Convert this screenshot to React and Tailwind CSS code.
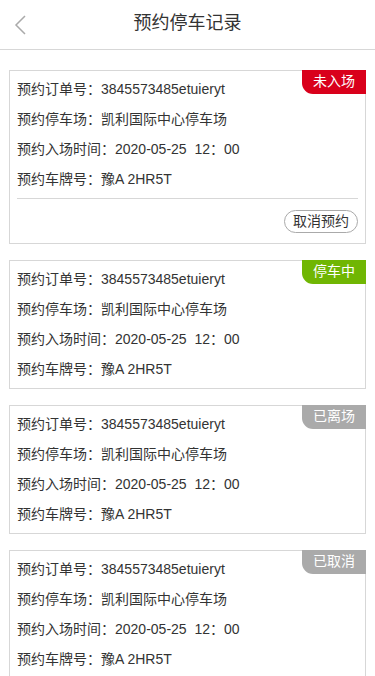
import React from "react";

const records = [
  { status: "未入场", color: "bg-[#d9001b]", cancel: true },
  { status: "停车中", color: "bg-[#70b603]" },
  { status: "已离场", color: "bg-[#aaaaaa]" },
  { status: "已取消", color: "bg-[#aaaaaa]" },
];

const Row = ({ children }) => (
  <div className="h-[30px] leading-[30px] text-[14px] text-[#333333]">{children}</div>
);

const RecordCard = ({ item }) => (
  <div className="relative border border-[#d7d7d7] bg-white px-[7px] pt-[3px] pb-[4px]">
    <div className={`absolute -top-px -right-px h-[24px] w-[64px] rounded-bl-[11px] ${item.color} text-center text-[14px] leading-[22px] text-white`}>
      {item.status}
    </div>
    <Row>预约订单号：3845573485etuieryt</Row>
    <Row>预约停车场：凯利国际中心停车场</Row>
    <Row>预约入场时间：2020-05-25&nbsp;&nbsp;12：00</Row>
    <Row>预约车牌号：豫A 2HR5T</Row>
    {item.cancel && (
      <div className="mt-[4px] border-t border-[#d7d7d7] pt-[11px] pb-[6px] flex justify-end">
        <button className="h-[23px] w-[74px] rounded-full border border-[#aaaaaa] text-[14px] leading-[21px] text-[#333333]">
          取消预约
        </button>
      </div>
    )}
  </div>
);

export default function App() {
  return (
    <div
      className="min-h-screen bg-white"
      style={{ fontFamily: '"Liberation Sans", "Noto Sans CJK SC", sans-serif' }}
    >
      <div className="relative h-[50px] border-b border-[#d7d7d7] flex items-center justify-center">
        <button className="absolute left-[12px] top-[14px] h-[22px] w-[16px]">
          <svg viewBox="0 0 16 22" className="h-[22px] w-[16px]" fill="none" stroke="#aaaaaa" strokeWidth="1.5">
            <path d="M13 2 L4 11 L13 20" />
          </svg>
        </button>
        <h1 className="text-[18px] text-[#333333] -mt-[2px]">预约停车记录</h1>
      </div>
      <div className="flex flex-col gap-[16px] px-[9px] pt-[20px] pb-4">
        {records.map((item, idx) => (
          <RecordCard key={idx} item={item} />
        ))}
      </div>
    </div>
  );
}
